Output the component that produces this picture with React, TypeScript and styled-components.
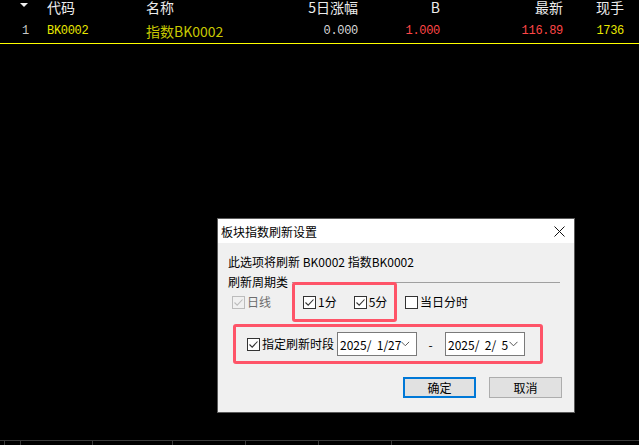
import React from 'react';
import styled, { createGlobalStyle } from 'styled-components';

const GlobalStyle = createGlobalStyle`
  html, body {
    margin: 0;
    padding: 0;
    background: #000;
  }
`;

const columns = [
  { key: 'idx', label: '', align: 'left' },
  { key: 'code', label: '代码', align: 'left' },
  { key: 'name', label: '名称', align: 'left' },
  { key: 'chg5', label: '5日涨幅', align: 'right' },
  { key: 'b', label: 'B', align: 'right' },
  { key: 'last', label: '最新', align: 'right' },
  { key: 'vol', label: '现手', align: 'right' },
];

const row = [
  { text: '1', color: '#c8c8c8', mono: true },
  { text: 'BK0002', color: '#e8e800', mono: true },
  { text: '指数BK0002', color: '#c8c800', mono: false },
  { text: '0.000', color: '#d8d8d8', mono: true },
  { text: '1.000', color: '#ff4646', mono: true },
  { text: '116.89', color: '#ff4646', mono: true },
  { text: '1736', color: '#e8e800', mono: true },
];

const tabWidths = [16, 72, 80, 73, 73, 73, 72];

function Check({ checked, disabled }: { checked: boolean; disabled?: boolean }) {
  return (
    <CheckBox $disabled={disabled}>
      {checked && (
        <svg width="11" height="11" viewBox="0 0 11 11">
          <path d="M1.5 5.5 L4.2 8.2 L9.5 2.5" fill="none" stroke={disabled ? '#bcbcbc' : '#333'} strokeWidth="1.1" />
        </svg>
      )}
    </CheckBox>
  );
}

function DatePicker({ value }: { value: string }) {
  return (
    <Picker>
      <span>{value}</span>
      <svg width="9" height="6" viewBox="0 0 9 6">
        <path d="M0.5 0.8 L4.5 4.8 L8.5 0.8" fill="none" stroke="#555" strokeWidth="1" />
      </svg>
    </Picker>
  );
}

function App() {
  return (
    <Screen>
      <GlobalStyle />
      <Table>
        <HeaderRow>
          {columns.map((c, i) => (
            <HeadCell key={c.key} $align={c.align}>
              {i === 0 ? <SortArrow /> : c.label}
            </HeadCell>
          ))}
        </HeaderRow>
        <DataRow>
          {row.map((c, i) => (
            <DataCell key={i} $align={columns[i].align} $color={c.color} $mono={c.mono}>
              {c.text}
            </DataCell>
          ))}
        </DataRow>
      </Table>

      <Workspace>
        <Dialog>
          <TitleBar>
            <span>板块指数刷新设置</span>
            <svg width="11" height="11" viewBox="0 0 11 11">
              <path d="M0.5 0.5 L10.5 10.5 M10.5 0.5 L0.5 10.5" stroke="#111" strokeWidth="1" />
            </svg>
          </TitleBar>
          <Body>
            <Info>此选项将刷新 BK0002 指数BK0002</Info>
            <GroupHeader>
              <span>刷新周期类</span>
              <GroupLine />
            </GroupHeader>
            <PeriodRow>
              <Option $disabled>
                <Check checked disabled />
                <span>日线</span>
              </Option>
              <Highlight $width={105}>
                <Option>
                  <Check checked />
                  <span>1分</span>
                </Option>
                <Option>
                  <Check checked />
                  <span>5分</span>
                </Option>
              </Highlight>
              <Option>
                <Check checked={false} />
                <span>当日分时</span>
              </Option>
            </PeriodRow>
            <RangeBox $width={310}>
              <Option>
                <Check checked />
                <span>指定刷新时段</span>
              </Option>
              <DatePicker value="2025/  1/27" />
              <Dash>-</Dash>
              <DatePicker value="2025/  2/  5" />
            </RangeBox>
            <Buttons>
              <Button $primary>确定</Button>
              <Button>取消</Button>
            </Buttons>
          </Body>
        </Dialog>
      </Workspace>

      <Footer>
        {tabWidths.map((w, i) => (
          <Tab key={i} style={{ width: w }} />
        ))}
      </Footer>
    </Screen>
  );
}

export default App;

const Screen = styled.div`
  width: 639px;
  height: 445px;
  background: #000;
  display: flex;
  flex-direction: column;
  overflow: hidden;
  font-family: 'Noto Sans CJK SC', 'Noto Sans', sans-serif;
`;

const Table = styled.div`
  display: flex;
  flex-direction: column;
`;

const gridCols = `
  display: grid;
  grid-template-columns: 34px 100px 106px 114px 82px 123px 61px;
  padding-left: 6px;
`;

const HeaderRow = styled.div`
  ${gridCols}
  height: 14px;
  align-items: center;
`;

const HeadCell = styled.div<{ $align: string }>`
  color: #ececec;
  font-size: 14px;
  line-height: 14px;
  text-align: ${(p) => p.$align};
  padding: ${(p) => (p.$align === 'right' ? '0 2px 0 0' : '0 0 0 7px')};
  &:first-child {
    padding-left: 14px;
    display: flex;
    align-items: center;
    height: 14px;
  }
  &:nth-child(3) {
    padding-left: 6px;
  }
`;

const SortArrow = styled.span`
  width: 0;
  height: 0;
  border-left: 4px solid transparent;
  border-right: 4px solid transparent;
  border-top: 4px solid #f0f0f0;
  margin-top: -5px;
`;

const DataRow = styled.div`
  ${gridCols}
  height: 29px;
  box-sizing: border-box;
  padding-top: 4px;
  align-items: center;
  border-bottom: 1px solid #ffff00;
  margin-top: 1px;
`;

const DataCell = styled.div<{ $align: string; $color: string; $mono: boolean }>`
  color: ${(p) => p.$color};
  font-family: ${(p) =>
    p.$mono ? "'Liberation Mono', monospace" : "'Noto Sans CJK SC', 'Noto Sans', sans-serif"};
  font-size: ${(p) => (p.$mono ? '12px' : '14px')};
  letter-spacing: ${(p) => (p.$mono ? '-0.3px' : '0')};
  text-align: ${(p) => p.$align};
  padding: ${(p) => (p.$align === 'right' ? '0 2px 0 0' : '0 0 0 7px')};
  &:first-child {
    padding-left: 16px;
  }
  &:nth-child(3) {
    padding-left: 6px;
  }
`;

const Workspace = styled.div`
  flex: 1;
  position: relative;
`;

const Dialog = styled.div`
  position: absolute;
  left: 217px;
  top: 174px;
  width: 356px;
  height: 193px;
  border: 1px solid #5a5a5a;
  background: #f0f0f0;
  display: flex;
  flex-direction: column;
  font-size: 12px;
  color: #000;
  font-family: 'Noto Sans CJK SC', 'Noto Sans', sans-serif;
`;

const TitleBar = styled.div`
  height: 24px;
  background: #fff;
  display: flex;
  align-items: center;
  justify-content: space-between;
  padding: 0 9px 0 3px;
  font-size: 12px;
`;

const Body = styled.div`
  display: flex;
  flex-direction: column;
  padding-left: 10px;
`;

const Info = styled.div`
  margin-top: 11px;
  height: 16px;
  line-height: 16px;
`;

const GroupHeader = styled.div`
  margin-top: 5px;
  height: 14px;
  display: flex;
  align-items: center;
  padding-right: 14px;
  span {
    line-height: 14px;
  }
`;

const GroupLine = styled.div`
  flex: 1;
  height: 1px;
  background: #a0a0a0;
  margin-left: 4px;
  margin-top: 1px;
`;

const PeriodRow = styled.div`
  display: flex;
  align-items: center;
  margin-top: -7px;
  padding-left: 4px;
  & > :first-child {
    width: 60px;
  }
  & > :last-child {
    margin-left: 8px;
  }
`;

const Highlight = styled.div<{ $width: number }>`
  width: ${(p) => p.$width}px;
  height: 40px;
  box-sizing: border-box;
  border: 3px solid #fe5468;
  border-radius: 3px;
  display: flex;
  align-items: center;
  padding-left: 8px;
  gap: 17px;
`;

const RangeBox = styled(Highlight)`
  margin-top: 2px;
  margin-left: 5px;
  padding-left: 11px;
  gap: 0;
`;

const Option = styled.label<{ $disabled?: boolean }>`
  display: flex;
  align-items: center;
  gap: 2px;
  color: ${(p) => (p.$disabled ? '#6d6d6d' : '#000')};
  white-space: nowrap;
  line-height: 16px;
`;

const CheckBox = styled.span<{ $disabled?: boolean }>`
  width: 13px;
  height: 13px;
  box-sizing: border-box;
  border: 1px solid ${(p) => (p.$disabled ? '#bcbcbc' : '#333')};
  background: ${(p) => (p.$disabled ? '#f0f0f0' : '#fff')};
  display: flex;
  align-items: center;
  justify-content: center;
`;

const Picker = styled.div`
  width: 80px;
  height: 24px;
  box-sizing: border-box;
  border: 1px solid #7a7a7a;
  background: #fff;
  display: flex;
  align-items: center;
  justify-content: space-between;
  padding: 0 6px 0 2px;
  margin-left: 3px;
  white-space: pre;
  font-size: 12px;
`;

const Dash = styled.span`
  width: 23px;
  text-align: center;
  padding-left: 2px;
`;

const Buttons = styled.div`
  display: flex;
  justify-content: flex-end;
  gap: 13px;
  margin-top: 13px;
  padding-right: 12px;
`;

const Button = styled.div<{ $primary?: boolean }>`
  width: 73px;
  height: 21px;
  box-sizing: border-box;
  border: ${(p) => (p.$primary ? '2px solid #0078d7' : '1px solid #adadad')};
  background: #e1e1e1;
  display: flex;
  align-items: center;
  justify-content: center;
  font-size: 12px;
`;

const Footer = styled.div`
  height: 4px;
  display: flex;
  padding-left: 4px;
  border-top: 1px solid #3a3a3a;
`;

const Tab = styled.div`
  border-left: 1px solid #3a3a3a;
  box-sizing: border-box;
`;
